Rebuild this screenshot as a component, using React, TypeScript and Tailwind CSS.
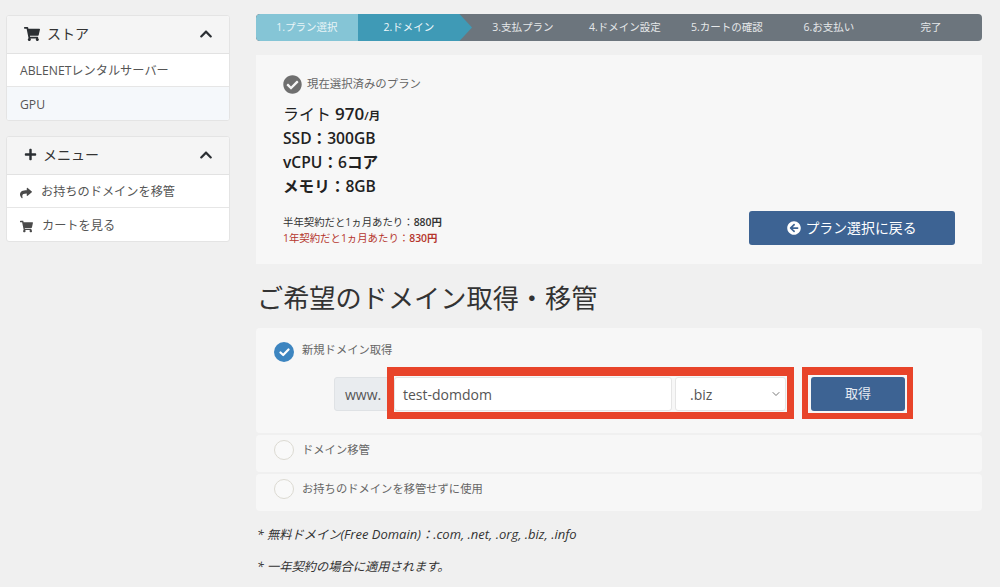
import { FaShoppingCart, FaPlus, FaChevronUp, FaShare, FaArrowCircleLeft, FaCheckCircle } from "react-icons/fa";
import { ChevronDown } from "lucide-react";

const font = "font-['Open_Sans','Noto_Sans_CJK_JP',sans-serif]";

function Panel({ icon, title, gap, children }: { icon: React.ReactNode; title: string; gap: string; children: React.ReactNode }) {
  return (
    <div className="rounded-[3px] border border-[#e4e4e4] bg-white overflow-hidden">
      <div className="h-[38px] flex items-center pl-[17px] pr-[16px] pb-[2px] bg-[#f5f5f5] border-b border-[#e2e2e2] text-[#333]">
        <span className="text-[#2b2f33]">{icon}</span>
        <span className={`text-[14px] ${gap}`}>{title}</span>
        <FaChevronUp className="ml-auto text-[#2b2f33] text-[14px]" />
      </div>
      {children}
    </div>
  );
}

function Row({ children, tinted, last }: { children: React.ReactNode; tinted?: boolean; last?: boolean }) {
  return (
    <div className={`h-[33px] flex items-center pl-[13px] pt-[3px] text-[12.2px] text-[#555] ${last ? "" : "border-b border-[#e6e6e6]"} ${tinted ? "bg-[#f5f8fb]" : ""}`}>
      {children}
    </div>
  );
}

const steps = [
  { label: "1.プラン選択", w: "w-[102px]", cls: "bg-[#85c5d6] rounded-l-[4px] text-[#e8f4f7]" },
  { label: "2.ドメイン", w: "w-[114px]", cls: "bg-[#3f9ab6] text-[#eef7fa] pr-[12px] [clip-path:polygon(0_0,89%_0,100%_50%,89%_100%,0_100%)]" },
  { label: "3.支払プラン", w: "w-[102px]", cls: "text-[#e6e8ea]" },
  { label: "4.ドメイン設定", w: "w-[102px]", cls: "text-[#e6e8ea]" },
  { label: "5.カートの確認", w: "w-[102px]", cls: "text-[#e6e8ea]" },
  { label: "6.お支払い", w: "w-[102px]", cls: "text-[#e6e8ea]" },
  { label: "完了", w: "w-[102px]", cls: "text-[#e6e8ea]" },
];

function Radio({ checked }: { checked?: boolean }) {
  return checked ? (
    <span className="w-[20px] h-[20px] rounded-full bg-[#3d85c0] flex items-center justify-center shrink-0">
      <svg width="11" height="9" viewBox="0 0 11 9" fill="none" stroke="white" strokeWidth="2.2" strokeLinecap="round" strokeLinejoin="round"><path d="M1.5 4.5 4.2 7 9.5 1.5" /></svg>
    </span>
  ) : (
    <span className="w-[20px] h-[20px] rounded-full border border-[#dcdad2] bg-[#f9f9f9] shrink-0" />
  );
}

export default function App() {
  return (
    <div className={`${font} w-[1000px] h-[587px] overflow-hidden bg-[#f0f0f0] flex items-start`}>
      <aside className="w-[224px] ml-[6px] mt-[15px] flex flex-col gap-[15px] shrink-0">
        <Panel icon={<FaShoppingCart className="text-[16px]" />} title="ストア" gap="ml-[7px]">
          <Row>ABLENETレンタルサーバー</Row>
          <Row tinted last>GPU</Row>
        </Panel>
        <Panel icon={<FaPlus className="text-[13px]" />} title="メニュー" gap="ml-[6px]">
          <Row><FaShare className="text-[12px] text-[#4a4a4a] mr-[9px]" />お持ちのドメインを移管</Row>
          <Row last><FaShoppingCart className="text-[13px] text-[#4a4a4a] mr-[9px]" />カートを見る</Row>
        </Panel>
      </aside>

      <main className="w-[726px] ml-[26px] mt-[14px] shrink-0">
        <div className="h-[27px] flex rounded-[4px] bg-[#6c757d] overflow-hidden">
          {steps.map((s) => (
            <div key={s.label} className={`${s.w} ${s.cls} h-full flex items-center justify-center text-[10.5px] shrink-0`}>
              {s.label}
            </div>
          ))}
        </div>

        <section className="mt-[14px] h-[209px] bg-[#f7f7f7] pl-[27px] pr-[27px] pt-[20px] flex justify-between items-end pb-[19px] relative">
          <div className="self-start">
            <div className="flex items-center gap-[5px] text-[11.4px] text-[#666] h-[18px]">
              <FaCheckCircle className="text-[19px] text-[#6f6f6f]" />
              現在選択済みのプラン
            </div>
            <div className="mt-[9px] text-[15.6px] leading-[24px] text-[#222] font-semibold">
              <div className="h-[24px]"><span className="font-normal text-[16px]">ライト</span> <span className="text-[17px]">970</span><span className="text-[11.5px]">/月</span></div>
              <div className="h-[24px]">SSD：300GB</div>
              <div className="h-[24px]">vCPU：6コア</div>
              <div className="h-[24px]">メモリ：8GB</div>
            </div>
            <div className="mt-[16px] text-[10.4px] leading-[16px] text-[#333]">
              <div>半年契約だと1ヵ月あたり：<b className="font-semibold">880円</b></div>
              <div className="text-[#b5352c]">1年契約だと1ヵ月あたり：<b className="font-semibold">830円</b></div>
            </div>
          </div>
          <button className="w-[206px] h-[34px] rounded-[3px] bg-[#3d6393] text-white text-[13.9px] flex items-center justify-center gap-[4px]">
            <FaArrowCircleLeft className="text-[14px]" />
            プラン選択に戻る
          </button>
        </section>

        <h2 className="mt-[16px] ml-[1px] text-[26.2px] leading-[36px] text-[#333] font-normal">ご希望のドメイン取得・移管</h2>

        <section className="mt-[12px] h-[105px] bg-[#f7f7f7] rounded-[4px] pl-[18px] pt-[14px]">
          <div className="flex items-center gap-[8px] text-[11.3px] text-[#666]">
            <Radio checked />
            <span className="-translate-y-[2px]">新規ドメイン取得</span>
          </div>
          <div className="mt-[15px] ml-[60px] flex items-center">
            <div className="w-[60px] h-[34px] rounded-l-[3px] bg-[#e9ecef] border border-[#dfe2e5] pl-[10px] flex items-center text-[14px] text-[#555]">www.</div>
            <div className="relative flex gap-[3px]">
              <div className="w-[278px] h-[34px] bg-white border border-[#e5e5e5] rounded-[3px] pl-[8px] flex items-center text-[14px] text-[#555]">test-domdom</div>
              <div className="w-[111px] h-[34px] bg-white border border-[#e5e5e5] rounded-[3px] pl-[14px] pr-[3px] flex items-center text-[14px] text-[#555]">
                .biz
                <ChevronDown className="ml-auto w-[12px] h-[12px] text-[#777]" />
              </div>
              <div className="absolute left-[-7px] right-[-8px] top-[-10px] bottom-[-8px] border-[7px] border-t-[9px] border-[#e8442a]" />
            </div>
            <div className="relative ml-[25px]">
              <button className="w-[94px] h-[34px] rounded-[3px] bg-[#3d6393] text-[#e6ebf2] text-[13px]">取得</button>
              <div className="absolute left-[-9px] right-[-8px] top-[-10px] bottom-[-8px] border-[6px] border-t-[8px] border-[#e8442a]" />
            </div>
          </div>
        </section>

        <section className="mt-[2px] h-[37px] bg-[#f7f7f7] rounded-[4px] pl-[18px] pt-[5px] flex items-start gap-[8px] text-[11.3px] text-[#666]">
          <Radio />
          <span className="mt-[2px]">ドメイン移管</span>
        </section>
        <section className="mt-[2px] h-[37px] bg-[#f7f7f7] rounded-[4px] pl-[18px] pt-[5px] flex items-start gap-[8px] text-[11.3px] text-[#666]">
          <Radio />
          <span className="mt-[2px]">お持ちのドメインを移管せずに使用</span>
        </section>

        <p className="mt-[14px] ml-[1px] text-[12.25px] leading-[18px] italic text-[#333]">* 無料ドメイン<span className="text-[13px]">(Free Domain)</span>：<span className="text-[13px]">.com, .net, .org, .biz, .info</span></p>
        <p className="mt-[14px] ml-[1px] text-[12.25px] leading-[18px] italic text-[#333]">* 一年契約の場合に適用されます。</p>
      </main>
    </div>
  );
}
